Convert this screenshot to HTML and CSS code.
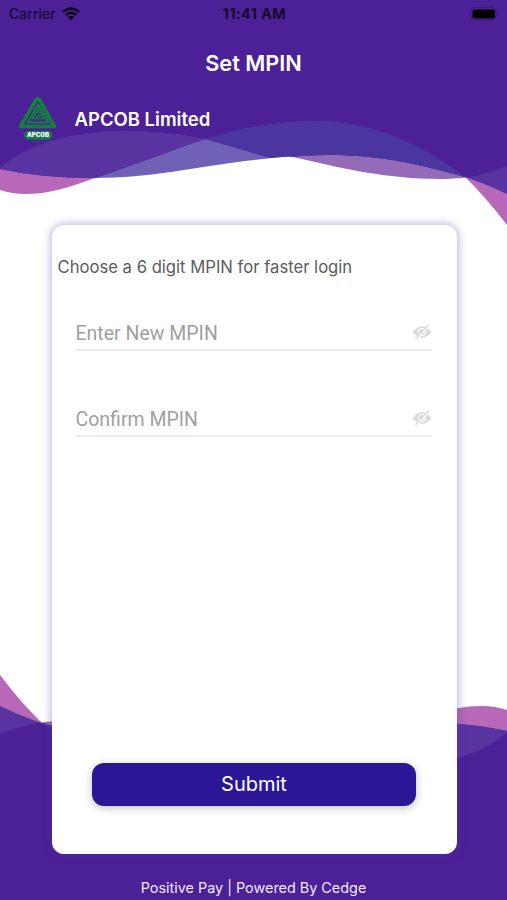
FILE: index.html
```html
<!DOCTYPE html>
<html lang="en">
<head>
<meta charset="utf-8">
<title>Set MPIN</title>
<link rel="stylesheet" href="styles.css">
</head>
<body>
<div class="screen">
  <svg class="waves" viewBox="0 0 507 900" aria-hidden="true">
    <defs>
      <path id="front" d="M0 0V169C28 175 60 178 95 178C150 178 194 167 254 160C286 156 307 155 330 155C382 155 422 165 465 177Q484 183 507 194V0Z"/>
      <path id="swell" d="M0 0V190Q12 194 25 194C49 194 67 188 95 178C132 166 166 152 205 139C242 127 281 121 318 121C372 121 422 145 465 177Q484 195 507 225V0Z"/>
      <path id="crest" d="M0 0V168C28 143 77 131 125 131C155 131 180 134 205 139C238 145 264 150 293 157C340 168 387 179 440 179Q475 180 507 166V0Z"/>
      <clipPath id="frontClip"><use href="#front"/></clipPath>
      <clipPath id="swellClip"><use href="#swell"/></clipPath>
      <g id="waveSet">
        <use href="#swell" fill="#b868b8"/>
        <use href="#crest" fill="#946bb8"/>
        <use href="#front" fill="#7060b6"/>
        <g clip-path="url(#frontClip)">
          <use href="#crest" fill="#4b36a0"/>
          <use href="#swell" fill="#5934a0"/>
          <path d="M205 139C242 127 281 121 318 121C372 121 422 145 465 177L293 165Z" fill="#4b36a0"/>
          <g clip-path="url(#swellClip)"><use href="#crest" fill="#4c2096"/></g>
        </g>
      </g>
      <path id="leftHump" d="M0 168C28 143 77 131 125 131C155 131 180 134 205 139C166 152 132 166 95 178C60 178 28 175 0 169Z"/>
      <path id="rightHump" d="M205 139C242 127 281 121 318 121C372 121 422 145 465 177C422 165 382 155 330 155Q307 155 293 157C264 150 238 145 205 139Z"/>
    </defs>
    <use href="#waveSet"/>
    <use href="#leftHump" fill="#5934a0"/>
    <use href="#rightHump" fill="#4b36a0"/>
    <use href="#waveSet" transform="rotate(180 253.5 450)"/>
    <use href="#leftHump" fill="#5934a0" transform="rotate(180 253.5 450)"/>
  </svg>

  <div class="status">
    <div class="carrier">
      <span>Carrier</span>
      <svg width="18" height="14" viewBox="0 0 18 14" fill="none" stroke="#08020f" stroke-width="2.4">
        <path d="M1 5Q9-2 17 5M3.9 8Q9 3.5 14.1 8"/>
        <path d="M6 10Q9 7.3 12 10L9 13.2Z" fill="#08020f" stroke="none"/>
      </svg>
    </div>
    <span class="clock">11:41 AM</span>
    <svg class="battery" width="30" height="14" viewBox="0 0 30 14">
      <rect x=".6" y=".6" width="25.5" height="12.4" rx="4" fill="none" stroke="#3c1778"/>
      <rect x="2.5" y="2.4" width="22.5" height="9" rx="2.2" fill="#000"/>
      <path d="M27.6 5Q29.6 6.8 27.6 8.8Z" fill="#3c1778"/>
    </svg>
  </div>

  <h1 class="title">Set MPIN</h1>

  <div class="bank">
    <svg class="logo" width="42" height="48" viewBox="0 0 42 48">
      <g fill="none" stroke="#13803f" stroke-linejoin="round">
        <path d="M3.5 31.5H36.5L21 4H18.5L2 32.5" stroke-width="3.6"/>
        <path d="M10 27.5H30.5L20 9.5L9 29" stroke-width="2.2"/>
        <path d="M14.5 23.5H26L20 14Z" stroke-width="1.6"/>
        <path d="M20 14V23M16 20L20 22L24 20" stroke-width="1.2"/>
      </g>
      <rect x="6" y="36" width="28" height="8.6" rx="4.3" fill="#13803f"/>
      <text x="20" y="42.4" text-anchor="middle" class="logo-text">APCOB</text>
      <path d="M9 46.5H31" stroke="#254d6c" stroke-width="1.2" stroke-dasharray="2 1.5"/>
    </svg>
    <span class="bank-name">APCOB Limited</span>
  </div>

  <main class="card">
    <p class="hint">Choose a 6 digit MPIN for faster login</p>
    <div class="field">
      <span class="label">Enter New MPIN</span>
      <svg class="eye" width="20" height="16" viewBox="0 0 20 16" fill="none" stroke="#d8dadc">
        <path d="M.5 8Q10-3.5 19.5 8Q10 19.5 .5 8Z" fill="#d8dadc" stroke="none"/>
        <circle cx="10" cy="8" r="3.5" stroke="#fff" stroke-width="1.2"/>
        <path d="M5 14.8L16.5 1.8" stroke="#fff" stroke-width="2"/>
        <path d="M3.5 15L17 .5" stroke-width="1.3"/>
      </svg>
    </div>
    <div class="field">
      <span class="label">Confirm MPIN</span>
      <svg class="eye" width="20" height="16" viewBox="0 0 20 16" fill="none" stroke="#d8dadc">
        <path d="M.5 8Q10-3.5 19.5 8Q10 19.5 .5 8Z" fill="#d8dadc" stroke="none"/>
        <circle cx="10" cy="8" r="3.5" stroke="#fff" stroke-width="1.2"/>
        <path d="M5 14.8L16.5 1.8" stroke="#fff" stroke-width="2"/>
        <path d="M3.5 15L17 .5" stroke-width="1.3"/>
      </svg>
    </div>
    <button class="submit" type="button">Submit</button>
  </main>

  <footer class="footer">Positive Pay | Powered By Cedge</footer>
</div>
</body>
</html>
```

FILE: styles.css
```css
* { box-sizing: border-box; }
body { margin: 0; font-family: Inter, "Liberation Sans", sans-serif; }
.screen {
  position: relative;
  isolation: isolate;
  width: 507px;
  height: 900px;
  overflow: hidden;
  background: #fff;
  display: flex;
  flex-direction: column;
}
.waves { position: absolute; inset: 0; width: 507px; height: 900px; z-index: -1; }
.status {
  height: 27px;
  padding: 0 7px 0 9px;
  display: grid;
  grid-template-columns: 1fr auto 1fr;
  align-items: center;
  font-size: 14px;
  color: #10041f;
}
.carrier { display: flex; align-items: center; gap: 6px; letter-spacing: 0.1px; }
.clock { font-weight: 600; font-size: 14.5px; letter-spacing: 0.45px; }
.battery { justify-self: end; }
.title {
  margin: 21px 0 0;
  height: 30px;
  line-height: 30px;
  text-align: center;
  font-size: 21.7px;
  font-weight: 600;
  color: #fff;
}
.bank { height: 50px; margin: 16px 0 0 18px; display: flex; align-items: center; gap: 14.5px; }
.logo-text { font: 900 6px Inter, sans-serif; fill: #fff; }
.bank-name { font-size: 18.5px; font-weight: 600; color: #fff; line-height: 24px; }
.card {
  width: 405px;
  height: 629px;
  margin: 81px 0 0 51.5px;
  padding-bottom: 48px;
  display: flex;
  flex-direction: column;
  background: #fff;
  border-radius: 12px;
  box-shadow: 0 0 9px 1px rgba(76, 50, 165, 0.4);
}
.hint { margin: 29.5px 0 37.5px 6px; font-size: 16.65px; line-height: 24px; color: #5c5c5c; white-space: nowrap; }
.field {
  height: 35px;
  margin: 0 24.5px 51px 24px;
  border-bottom: 2px solid #ededed;
  display: flex;
  align-items: center;
  justify-content: space-between;
}
.label { font: 19.5px/28px Roboto, sans-serif; color: #a0a0a0; padding-top: 2px; }
.eye { margin-top: -2px; }
.submit {
  width: 324px;
  height: 43px;
  margin: auto 0 0 40.5px;
  padding: 0;
  border: 0;
  border-radius: 12px;
  background: #2b1796;
  box-shadow: 0 2px 9px rgba(0, 0, 0, 0.25);
  color: #fff;
  font: 20px/43px Inter, sans-serif;
}
.footer { margin-top: 23px; text-align: center; font-size: 14.4px; line-height: 22px; color: #f0e8fa; }
```
